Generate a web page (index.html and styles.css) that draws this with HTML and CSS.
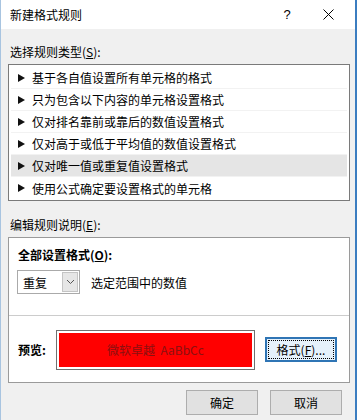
FILE: index.html
```html
<!DOCTYPE html>
<html lang="zh-CN">
<head>
  <meta charset="UTF-8">
  <title>新建格式规则</title>
  <link rel="stylesheet" href="styles.css">
</head>
<body>

  <div class="window">
    <div class="titlebar">
      <span class="title">新建格式规则</span>
      <span class="help">?</span>
      <span class="close">
        <svg width="11" height="11" viewBox="0 0 11 11"><path d="M0.5 0.5 L10.5 10.5 M10.5 0.5 L0.5 10.5" stroke="#000" stroke-width="1" fill="none"/></svg>
      </span>
    </div>

    <div class="content">
      <div class="label">选择规则类型(<u>S</u>):</div>
      <div class="rule-list">
        <div class="rule"><i class="arrow"></i>基于各自值设置所有单元格的格式</div>
        <div class="rule"><i class="arrow"></i>只为包含以下内容的单元格设置格式</div>
        <div class="rule"><i class="arrow"></i>仅对排名靠前或靠后的数值设置格式</div>
        <div class="rule"><i class="arrow"></i>仅对高于或低于平均值的数值设置格式</div>
        <div class="rule selected"><i class="arrow"></i>仅对唯一值或重复值设置格式</div>
        <div class="rule last"><i class="arrow"></i>使用公式确定要设置格式的单元格</div>
      </div>

      <div class="label label-edit">编辑规则说明(<u>E</u>):</div>
      <div class="edit-box">
        <div class="edit-top">
          <div class="bold">全部设置格式(<u>O</u>):</div>
          <div class="combo-row">
            <div class="combo">
              <span class="combo-text">重复</span>
              <span class="combo-btn">
                <svg width="9" height="6" viewBox="0 0 9 6"><path d="M1 1 L4.5 4.5 L8 1" stroke="#555" stroke-width="1" fill="none"/></svg>
              </span>
            </div>
            <span class="combo-note">选定范围中的数值</span>
          </div>
        </div>
        <div class="edit-bottom">
          <span class="bold preview-label">预览:</span>
          <div class="preview">
            <div class="preview-fill">微软卓越&nbsp; AaBbCc</div>
          </div>
          <button class="btn btn-focus"><span class="focus-ring">格式(<u>F</u>)...</span></button>
        </div>
      </div>

      <div class="footer">
        <button class="btn">确定</button>
        <button class="btn">取消</button>
      </div>
    </div>
  </div>

</body>
</html>
```

FILE: styles.css
```css
body {
  margin: 0;
  background-color: #f0f0f0;
  font-family: "Noto Sans CJK SC", "Noto Sans", sans-serif;
  font-size: 12px;
  color: #000;
}
.window {
  width: 357px;
  height: 420px;
  box-sizing: border-box;
  border-left: 1px solid #a8c4e0;
  border-right: 2px solid #3b7dc0;
  overflow: hidden;
}
.titlebar {
  height: 29px;
  background-color: #fff;
  display: flex;
  align-items: center;
  padding-left: 9px;
}
.title {
  flex: 1;
  line-height: 16px;
}
.help {
  width: 20px;
  text-align: center;
  font-family: "Liberation Sans", sans-serif;
  font-size: 13px;
}
.close {
  width: 30px;
  margin: 0 12px 0 16px;
  display: flex;
  justify-content: center;
}
.content {
  padding: 0 5px 0 7px;
}
.label {
  line-height: 16px;
  margin-top: 15px;
  margin-left: 2px;
  margin-bottom: 4px;
}
.label-edit {
  margin-top: 16px;
}
.rule-list {
  background-color: #fff;
  border: 1px solid #7a7a7a;
  padding: 2px 2px 1px;
}
.rule {
  height: 22px;
  box-sizing: border-box;
  display: flex;
  align-items: center;
  padding-left: 7px;
  border-bottom: 1px solid #f2f2f2;
}
.rule.last {
  border-bottom: none;
}
.rule.selected {
  background-color: #e5e5e5;
}
.arrow {
  width: 0;
  height: 0;
  border-left: 7px solid #111;
  border-top: 4px solid transparent;
  border-bottom: 4px solid transparent;
  margin-right: 7px;
}
.edit-box {
  background-color: #fff;
  border: 1px solid #9a9a9a;
}
.edit-top {
  height: 78px;
  border-bottom: 1px solid #cccccc;
  padding-left: 9px;
  box-sizing: border-box;
  padding-top: 9px;
}
.bold {
  font-weight: bold;
  line-height: 16px;
}
.combo-row {
  display: flex;
  align-items: center;
  margin-top: 7px;
}
.combo {
  width: 63px;
  height: 24px;
  box-sizing: border-box;
  border: 1px solid #aaaaaa;
  display: flex;
  align-items: center;
  justify-content: space-between;
  margin-left: -1px;
}
.combo-text {
  padding-left: 5px;
}
.combo-btn {
  width: 16px;
  height: 20px;
  box-sizing: border-box;
  margin-right: 1px;
  background-color: #e6e6e6;
  border: 1px solid #c4c4c4;
  display: flex;
  align-items: center;
  justify-content: center;
}
.combo-note {
  margin-left: 11px;
}
.edit-bottom {
  height: 66px;
  display: flex;
  align-items: center;
  padding-left: 9px;
  padding-top: 1px;
  box-sizing: border-box;
}
.preview-label {
  width: 38px;
}
.preview {
  width: 199px;
  height: 40px;
  box-sizing: border-box;
  border: 1px solid #707070;
  padding: 2px;
}
.preview-fill {
  height: 100%;
  background-color: #ff0000;
  color: #8b1010;
  display: flex;
  align-items: center;
  justify-content: center;
}
.btn {
  width: 72px;
  height: 25px;
  box-sizing: border-box;
  background-color: #e1e1e1;
  border: 1px solid #adadad;
  font-family: "Noto Sans CJK SC", "Noto Sans", sans-serif;
  font-size: 12px;
  color: #000;
  padding: 0;
}
.btn-focus {
  margin-left: 10px;
  border: 2px solid #2f75b5;
  background-color: #e5f1fb;
  padding: 1px;
  display: flex;
}
.focus-ring {
  flex: 1;
  border: 1px dotted #000;
  display: flex;
  align-items: center;
  justify-content: center;
}
.footer {
  display: flex;
  justify-content: flex-end;
  gap: 12px;
  margin-top: 7px;
  margin-right: 8px;
}
```
